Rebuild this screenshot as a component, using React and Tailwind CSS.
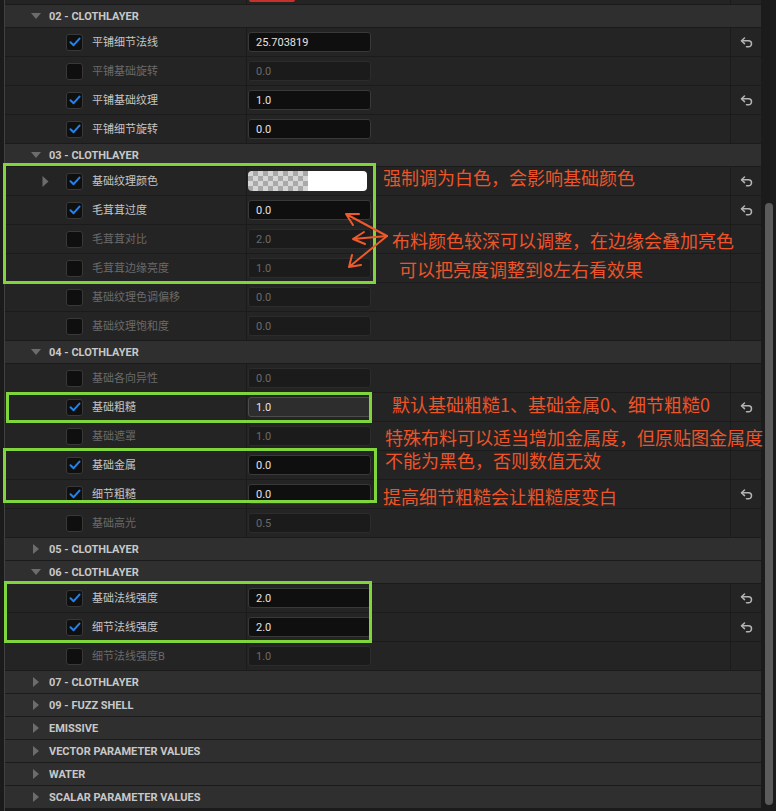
import React from 'react';

const ROWS = [
  { h: '02 - CLOTHLAYER', open: true },
  { label: '平铺细节法线', value: '25.703819', on: true, reset: true },
  { label: '平铺基础旋转', value: '0.0' },
  { label: '平铺基础纹理', value: '1.0', on: true, reset: true },
  { label: '平铺细节旋转', value: '0.0', on: true },
  { h: '03 - CLOTHLAYER', open: true },
  { label: '基础纹理颜色', color: true, on: true, reset: true, expand: true },
  { label: '毛茸茸过度', value: '0.0', on: true, reset: true },
  { label: '毛茸茸对比', value: '2.0' },
  { label: '毛茸茸边缘亮度', value: '1.0' },
  { label: '基础纹理色调偏移', value: '0.0' },
  { label: '基础纹理饱和度', value: '0.0' },
  { h: '04 - CLOTHLAYER', open: true },
  { label: '基础各向异性', value: '0.0' },
  { label: '基础粗糙', value: '1.0', on: true, reset: true, hover: true },
  { label: '基础遮罩', value: '1.0' },
  { label: '基础金属', value: '0.0', on: true },
  { label: '细节粗糙', value: '0.0', on: true, reset: true },
  { label: '基础高光', value: '0.5' },
  { h: '05 - CLOTHLAYER' },
  { h: '06 - CLOTHLAYER', open: true },
  { label: '基础法线强度', value: '2.0', on: true, reset: true },
  { label: '细节法线强度', value: '2.0', on: true, reset: true },
  { label: '细节法线强度B', value: '1.0' },
  { h: '07 - CLOTHLAYER' },
  { h: '09 - FUZZ SHELL' },
  { h: 'EMISSIVE' },
  { h: 'VECTOR PARAMETER VALUES' },
  { h: 'WATER' },
  { h: 'SCALAR PARAMETER VALUES' },
];

const NOTES = [
  { t: '强制调为白色，会影响基础颜色', x: 383, y: 169 },
  { t: '布料颜色较深可以调整，在边缘会叠加亮色', x: 392, y: 232 },
  { t: '可以把亮度调整到8左右看效果', x: 399, y: 261 },
  { t: '默认基础粗糙1、基础金属0、细节粗糙0', x: 392, y: 396 },
  { t: '特殊布料可以适当增加金属度，但原贴图金属度', x: 385, y: 429 },
  { t: '不能为黑色，否则数值无效', x: 385, y: 452 },
  { t: '提高细节粗糙会让粗糙度变白', x: 383, y: 488 },
];

const ResetIcon = () => (
  <svg width="13" height="11" viewBox="0 0 13 11" fill="none" stroke="#b4b4b4" strokeWidth="1.5" strokeLinecap="round" strokeLinejoin="round">
    <path d="M4.5 1 L1.5 3.8 L4.5 6.6" />
    <path d="M1.8 3.8 H8.5 A3 3 0 0 1 8.5 9.8 H6.5" />
  </svg>
);

const Check = () => (
  <svg width="12" height="10" viewBox="0 0 12 10" fill="none" stroke="#2483ea" strokeWidth="2" strokeLinecap="round" strokeLinejoin="round">
    <path d="M1.5 5.2 L4.6 8.2 L10.5 1.6" />
  </svg>
);

function Header({ h, open }) {
  return (
    <div className="flex items-center h-[23px] border-b border-[#1b1b1b] bg-[#2f2f2f] pl-[26px]">
      <div className="w-[18px] flex items-center">
        {open ? (
          <svg width="10" height="6" viewBox="0 0 10 6"><path d="M0 0 H10 L5 6 Z" fill="#6c6c6c" /></svg>
        ) : (
          <svg width="10" height="10" viewBox="0 0 10 10"><path d="M2 0 L8 5 L2 10 Z" fill="#6c6c6c" /></svg>
        )}
      </div>
      <span className="text-[11px] font-bold text-[#c8c8c8] leading-none">{h}</span>
    </div>
  );
}

function Row({ label, value, on, reset, expand, color, hover }) {
  return (
    <div className="flex h-[29px] border-b border-[#1b1b1b] bg-[#242424]">
      <div className="w-[242px] shrink-0 flex items-center border-r border-[#1b1b1b] pl-[37px]">
        <div className="w-[24px] flex items-center">
          {expand && (
            <svg width="7" height="11" viewBox="0 0 7 11"><path d="M0.5 0 L6.5 5.5 L0.5 11 Z" fill="#6c6c6c" /></svg>
          )}
        </div>
        <div className="w-[17px] h-[17px] rounded-[3px] bg-[#0f0f0f] border border-[#383838] flex items-center justify-center">
          {on && <Check />}
        </div>
        <span className={`ml-[9px] text-[11px] leading-none ${on ? 'text-[#c4c4c4]' : 'text-[#6a6a6a]'}`}>{label}</span>
      </div>
      <div className="w-[484px] shrink-0 flex items-center border-r border-[#1b1b1b] pl-px">
        {color ? (
          <div className="flex w-[119px] h-[20px] rounded-[4px] overflow-hidden">
            <div className="w-[60px] bg-[repeating-conic-gradient(#a9a9a9_0%_25%,#d6d6d6_0%_50%)] bg-[length:10px_10px]" />
            <div className="flex-1 bg-white" />
          </div>
        ) : (
          <div
            className={`w-[123px] h-[20px] rounded-[3px] border flex items-center pl-[7px] text-[11px] leading-none ${
              hover
                ? 'bg-[#2d2d2d] border-[#4c4c4c] text-[#e4e4e4]'
                : on
                ? 'bg-[#0f0f0f] border-[#393939] text-[#e4e4e4]'
                : 'bg-[#1b1b1b] border-[#2c2c2c] text-[#6a6a6a]'
            }`}
          >
            {value}
          </div>
        )}
      </div>
      <div className="w-[30px] flex items-center justify-center">{reset && <ResetIcon />}</div>
    </div>
  );
}

export default function App() {
  return (
    <div className="relative w-[776px] h-[811px] overflow-hidden flex bg-[#1b1b1b] font-[Roboto,'Noto_Sans_CJK_SC',sans-serif]">
      <div className="w-[4px] shrink-0 bg-[#1b1b1b]" />
      <div className="w-[757px] shrink-0 flex flex-col border-l border-[#414141]">
        <div className="flex h-[5px] border-b border-[#1b1b1b] bg-[#242424]">
          <div className="w-[242px] shrink-0 border-r border-[#1b1b1b]" />
          <div className="w-[484px] shrink-0 border-r border-[#1b1b1b] pl-[2px]">
            <div className="w-[46px] h-[2px] rounded-b-[2px] bg-[#c8302c]" />
          </div>
        </div>
        {ROWS.map((r, i) => (r.h ? <Header key={i} {...r} /> : <Row key={i} {...r} />))}
      </div>
      <div className="w-[15px] shrink-0 bg-[#1b1b1b] pt-[203px] pb-[6px] pl-[4px] pr-[3px]">
        <div className="h-full rounded-full bg-[#5b5b5b]" />
      </div>

      {/* annotations */}
      <div className="pointer-events-none absolute inset-0">
        <div className="absolute left-[3px] top-[163px] w-[373px] h-[121px] border-[3px] border-[#80d53c]" />
        <div className="absolute left-[6px] top-[392px] w-[366px] h-[31px] border-[3px] border-[#80d53c]" />
        <div className="absolute left-[3px] top-[448px] w-[374px] h-[55px] border-[3px] border-[#80d53c]" />
        <div className="absolute left-[4px] top-[581px] w-[368px] h-[62px] border-[3px] border-[#80d53c]" />
        <svg className="absolute left-0 top-0" width="776" height="811" viewBox="0 0 776 811" fill="none" stroke="#ef5a2c" strokeWidth="2" strokeLinecap="round">
          <path d="M387 236 L346 214 M346 214 L359 214 M346 214 L353 225" />
          <path d="M387 236 L353 239 M353 239 L364 232 M353 239 L365 244" />
          <path d="M387 236 L349 267 M349 267 L361 265 M349 267 L352 255" />
        </svg>
        {NOTES.map((n, i) => (
          <div
            key={i}
            className="absolute whitespace-nowrap text-[18px] leading-[16px] text-[#ee5429] font-['Noto_Sans_CJK_SC',sans-serif]"
            style={{ left: n.x, top: n.y }}
          >
            {n.t}
          </div>
        ))}
      </div>
    </div>
  );
}
